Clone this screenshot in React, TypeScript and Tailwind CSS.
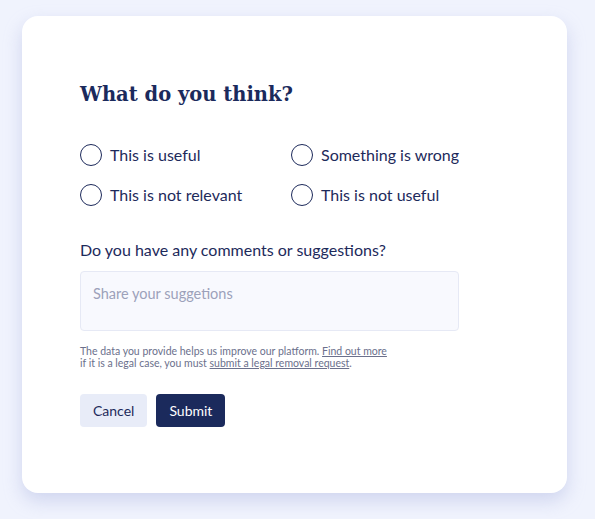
export default function App() {
  const options = [
    "This is useful",
    "Something is wrong",
    "This is not relevant",
    "This is not useful",
  ];
  return (
    <div className="min-h-[519px] w-[595px] bg-[#f0f3fd] pt-4 pl-[22px] font-['Lato',sans-serif] text-[#1d2a5b]">
      <div className="w-[545px] h-[477px] rounded-2xl bg-white shadow-[0_8px_18px_rgba(160,170,220,0.4)] px-[58px] pt-[64px]">
        {/* Titre */}
        <h2 className="font-['DejaVu_Serif',serif] font-bold text-[19.5px] leading-[30px] text-[#1b2a5c]">
          What do you think?
        </h2>

        {/* Options */}
        <div className="grid grid-cols-[211px_1fr] gap-y-[18px] mt-[34px]">
          {options.map((o) => (
            <label key={o} className="flex items-center gap-2 text-[16px] leading-[22px]">
              <span className="w-[22px] h-[22px] rounded-full border-[1.5px] border-[#1d2a5b] shrink-0" />
              {o}
            </label>
          ))}
        </div>

        <p className="mt-[33px] text-[16px] leading-[22px]">Do you have any comments or suggestions?</p>

        <div className="mt-[10px] w-[379px] h-[60px] rounded bg-[#f8f9fe] border border-[#e6e9f5] px-[12px] pt-[12px] text-[14.5px] leading-[20px] text-[#9ca1ba]">
          Share your suggetions
        </div>

        <p className="mt-[14px] text-[10.5px] leading-[12px] text-[#6b708c]">
          The data you provide helps us improve our platform. <span className="underline">Find out more</span>
          <br />
          if it is a legal case, you must <span className="underline">submit a legal removal request</span>.
        </p>

        <div className="flex gap-[9px] mt-[25px]">
          <button className="h-[33px] px-[13px] rounded bg-[#e8ecf8] text-[14px] text-[#1d2a5b]">Cancel</button>
          <button className="h-[33px] px-[13px] rounded bg-[#1b2a5c] text-[14px] text-white">Submit</button>
        </div>
      </div>
    </div>
  );
}
